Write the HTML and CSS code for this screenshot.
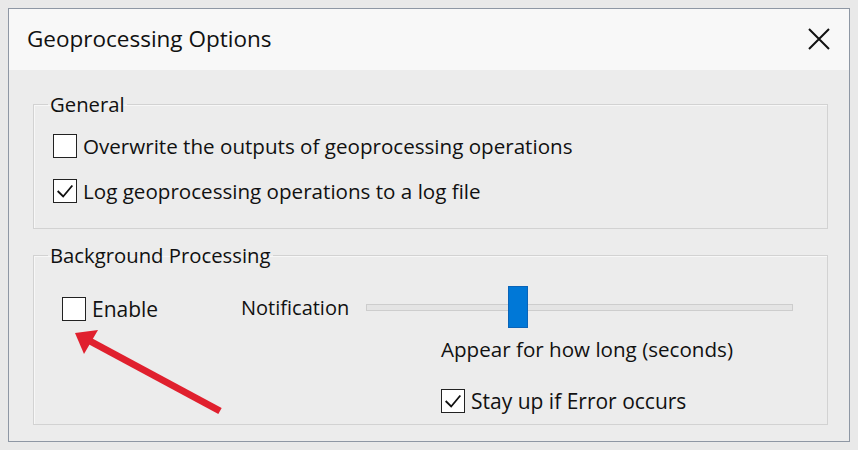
FILE: index.html
```html
<!DOCTYPE html>
<html>
<head>
<meta charset="utf-8">
<link rel="stylesheet" href="styles.css">
</head>
<body>
<div class="window">
  <div class="titlebar">
    <span class="title">Geoprocessing Options</span>
    <svg class="close" width="22" height="22" viewBox="0 0 22 22"><path d="M1 1 L21 21 M21 1 L1 21" stroke="#111" stroke-width="2" fill="none"/></svg>
  </div>
  <div class="content">
    <fieldset class="group general">
      <legend>General</legend>
      <label class="check"><span class="box"></span>Overwrite the outputs of geoprocessing operations</label>
      <label class="check"><span class="box checked"><svg viewBox="0 0 24 24" width="22" height="22"><path d="M4 12 L10 18 L20 6" stroke="#111" stroke-width="2" fill="none"/></svg></span>Log geoprocessing operations to a log file</label>
    </fieldset>
    <fieldset class="group background">
      <legend>Background Processing</legend>
      <div class="bg-grid">
        <label class="check enable"><span class="box"></span>Enable</label>
        <span class="notif">Notification</span>
        <div class="slider">
          <div class="track"></div>
          <div class="thumb"></div>
        </div>
        <div class="right-col">
          <div class="appear">Appear for how long (seconds)</div>
          <label class="check stay"><span class="box checked"><svg viewBox="0 0 24 24" width="22" height="22"><path d="M4 12 L10 18 L20 6" stroke="#111" stroke-width="2" fill="none"/></svg></span>Stay up if Error occurs</label>
        </div>
      </div>
    </fieldset>
  </div>
</div>
<svg class="arrow" width="858" height="450" viewBox="0 0 858 450">
  <line x1="220" y1="411" x2="88" y2="340" stroke="#e0202e" stroke-width="7"/>
  <polygon points="75,333 98,330 84,354" fill="#e0202e"/>
</svg>
</body>
</html>
```
FILE: styles.css
```css
html, body {
  margin: 0;
  padding: 0;
}
body {
  background: #e9e9e9;
  width: 858px;
  height: 450px;
  padding: 8px 0 0 8px;
  box-sizing: border-box;
  font-family: "Open Sans", "Noto Sans", sans-serif;
  color: #111;
  position: relative;
  overflow: hidden;
}
.window {
  width: 842px;
  height: 434px;
  box-sizing: border-box;
  border: 1px solid #8e97a4;
  background: #ececec;
  display: flex;
  flex-direction: column;
}
.titlebar {
  height: 61px;
  background: #f8f8f8;
  display: flex;
  align-items: center;
  justify-content: space-between;
  padding: 0 19px 0 18px;
  flex-shrink: 0;
}
.title {
  font-size: 22.5px;
  margin-top: -2px;
}
.close {
  margin-top: -2px;
}
.content {
  padding: 22px 21px 0 24px;
  display: flex;
  flex-direction: column;
}
.group {
  margin: 0;
  border: 1px solid #d2d2d2;
  box-shadow: inset 1px 1px 0 #f7f7f7;
  padding: 0 0 0 14px;
  min-width: 0;
}
legend {
  font-size: 20.3px;
  padding: 0 2px;
  line-height: 24px;
}
.general {
  height: 137px;
  box-sizing: border-box;
  padding-top: 17px;
}
.check {
  display: flex;
  align-items: center;
  font-size: 20.6px;
  height: 26px;
}
.general .check {
  margin-left: 5px;
  margin-bottom: 19px;
}
.box {
  width: 22px;
  height: 22px;
  border: 1px solid #222;
  background: #fff;
  margin-right: 6px;
  flex-shrink: 0;
  display: flex;
}
.box svg {
  display: block;
}
.background {
  margin-top: 14px;
  height: 182px;
  box-sizing: border-box;
}
.bg-grid {
  display: grid;
  grid-template-columns: 193px 125px 427px;
  grid-template-rows: 52px auto;
  align-items: center;
  margin-top: 14px;
}
.enable {
  margin-left: 14px;
  margin-top: 3px;
}
.enable.check {
  font-size: 21px;
}
.notif {
  font-size: 20px;
}
.slider {
  position: relative;
  height: 42px;
}
.track {
  position: absolute;
  left: 0;
  right: 0;
  top: 18px;
  height: 5px;
  border: 1px solid #cdcdcd;
  background: #e4e4e4;
}
.thumb {
  position: absolute;
  left: 142px;
  top: 0;
  width: 18px;
  height: 40px;
  background: #0078d7;
  border: 1px solid #0a64b8;
}
.right-col {
  grid-column: 3;
  padding-left: 75px;
}
.appear {
  font-size: 20.6px;
  margin-top: 2px;
}
.stay {
  margin-top: 25px;
  font-size: 21px;
}
.arrow {
  position: absolute;
  left: 0;
  top: 0;
  pointer-events: none;
}
```
